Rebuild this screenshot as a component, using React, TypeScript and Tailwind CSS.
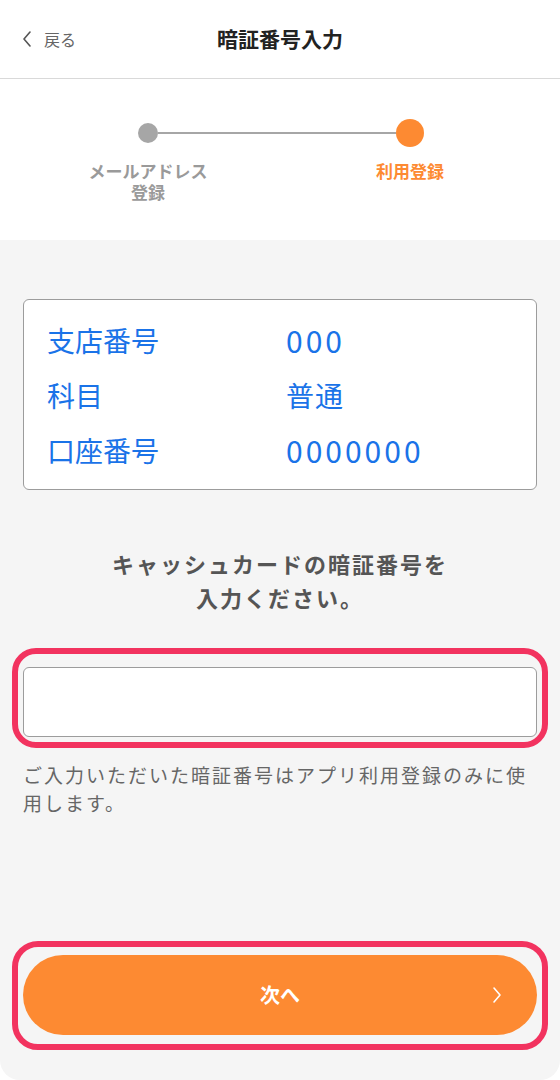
import { useState } from "react";

const FONT = "font-['Noto_Sans_CJK_JP','Noto_Sans',sans-serif]";

function BackIcon() {
  return (
    <svg width="10" height="16" viewBox="0 0 10 16" fill="none" className="stroke-[#555]">
      <polyline points="8,1 2,8 8,15" strokeWidth="1.6" strokeLinecap="round" strokeLinejoin="round" />
    </svg>
  );
}

function NextIcon() {
  return (
    <svg width="10" height="18" viewBox="0 0 10 18" fill="none" className="stroke-white">
      <polyline points="2,2 8,9 2,16" strokeWidth="1.6" strokeLinecap="round" strokeLinejoin="round" />
    </svg>
  );
}

const rows = [
  { label: "支店番号", value: "000", numeric: true },
  { label: "科目", value: "普通", numeric: false },
  { label: "口座番号", value: "0000000", numeric: true },
];

export default function App() {
  const [pin, setPin] = useState("");

  return (
    <div className={`${FONT} flex min-h-[1080px] flex-col bg-white`}>
      <header className="grid h-[79px] grid-cols-[1fr_auto_1fr] items-center border-b border-[#d9d9d9] px-[22px]">
        <button className="flex items-center gap-[12px] text-[16px] text-[#666]">
          <BackIcon />
          戻る
        </button>
        <h1 className="text-[21px] font-bold text-[#222]">暗証番号入力</h1>
        <div />
      </header>

      <section className="h-[161px] pt-[40px]">
        <div className="ml-[138px] flex w-[286px] items-center">
          <span className="h-[20px] w-[20px] rounded-full bg-[#a6a6a6]" />
          <span className="h-[2px] flex-1 bg-[#a6a6a6]" />
          <span className="h-[28px] w-[28px] rounded-full bg-[#fd8a32]" />
        </div>
        <div className="mt-[11px] flex text-[17px] font-bold leading-[25px]">
          <p className="ml-[78px] w-[140px] text-center text-[#9a9a9a]">
            <span className="block">メールアドレス</span>
            <span className="-mt-[4px] block">登録</span>
          </p>
          <p className="ml-[122px] w-[140px] text-center text-[#fd8a32]">利用登録</p>
        </div>
      </section>

      <main className="flex flex-1 flex-col rounded-b-[20px] bg-[#f5f5f5] px-[23px] pt-[59px] pb-[45px]">
        <div className="rounded-[6px] border border-[#9c9c9c] bg-white pt-[13px] pb-[11px] pl-[23px]">
          {rows.map((row) => (
            <div key={row.label} className="flex items-center text-[28px] leading-[55px] text-[#1a73e8]">
              <span className="w-[239px]">{row.label}</span>
              <span className={row.numeric ? "text-[30px] tracking-[3px]" : "tracking-[1px]"}>{row.value}</span>
            </div>
          ))}
        </div>

        <p className="mt-[56px] text-center text-[22px] font-bold leading-[34px] tracking-[2px] text-[#555]">
          キャッシュカードの暗証番号を
          <br />
          入力ください。
        </p>

        <div className="relative mt-[53px]">
          <div className="pointer-events-none absolute -top-[19px] -left-[11px] -right-[11px] -bottom-[11px] rounded-[24px] border-[6px] border-[#f2335f]" />
          <input
            type="password"
            inputMode="numeric"
            value={pin}
            onChange={(event) => setPin(event.target.value)}
            className="block h-[70px] w-full rounded-[6px] border border-[#9c9c9c] bg-white px-4 text-[22px] outline-none"
          />
        </div>

        <p className="mt-[24px] text-[19px] leading-[28px] tracking-[2px] text-[#666]">
          ご入力いただいた暗証番号はアプリ利用登録のみに使用します。
        </p>

        <div className="relative mt-auto">
          <div className="pointer-events-none absolute -top-[14px] -left-[11px] -right-[11px] -bottom-[15px] rounded-[26px] border-[6px] border-[#f2335f]" />
          <button className="relative flex h-[80px] w-full items-center justify-center rounded-full bg-[#fd8a32] text-[20px] font-bold text-white">
            次へ
            <span className="absolute right-[35px] top-1/2 -translate-y-1/2">
              <NextIcon />
            </span>
          </button>
        </div>
      </main>
    </div>
  );
}
